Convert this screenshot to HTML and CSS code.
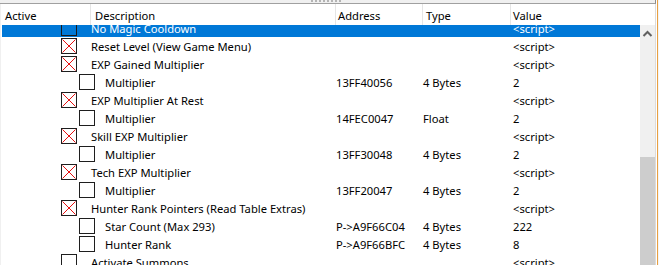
FILE: index.html
```html
<!DOCTYPE html>
<html>
<head>
<meta charset="utf-8">
<link rel="stylesheet" href="styles.css">
</head>
<body>
<div class="frame">
  <div class="main">
    <div class="splitter"><span class="grip"></span></div>
    <div class="list">
      <div class="header">
        <div class="hcell h-active">Active</div>
        <div class="hcell h-desc">Description</div>
        <div class="hcell h-addr">Address</div>
        <div class="hcell h-type">Type</div>
        <div class="hcell h-val">Value</div>
      </div>
      <div class="content">
        <div class="rows">
          <div class="row top selected scrolled">
            <div class="c-desc"><span class="cb"></span><span class="txt">No Magic Cooldown</span></div>
            <div class="c-addr"></div><div class="c-type"></div><div class="c-val">&lt;script&gt;</div>
          </div>
          <div class="row top">
            <div class="c-desc"><span class="cb x"><svg viewBox="0 0 16 16" width="16" height="16"><path d="M1.5 1.5L14.5 14.5M14.5 1.5L1.5 14.5"/></svg></span><span class="txt">Reset Level (View Game Menu)</span></div>
            <div class="c-addr"></div><div class="c-type"></div><div class="c-val">&lt;script&gt;</div>
          </div>
          <div class="row top">
            <div class="c-desc"><span class="cb x"><svg viewBox="0 0 16 16" width="16" height="16"><path d="M1.5 1.5L14.5 14.5M14.5 1.5L1.5 14.5"/></svg></span><span class="txt">EXP Gained Multiplier</span></div>
            <div class="c-addr"></div><div class="c-type"></div><div class="c-val">&lt;script&gt;</div>
          </div>
          <div class="row child">
            <div class="c-desc"><span class="cb"></span><span class="txt">Multiplier</span></div>
            <div class="c-addr">13FF40056</div><div class="c-type">4 Bytes</div><div class="c-val">2</div>
          </div>
          <div class="row top">
            <div class="c-desc"><span class="cb x"><svg viewBox="0 0 16 16" width="16" height="16"><path d="M1.5 1.5L14.5 14.5M14.5 1.5L1.5 14.5"/></svg></span><span class="txt">EXP Multiplier At Rest</span></div>
            <div class="c-addr"></div><div class="c-type"></div><div class="c-val">&lt;script&gt;</div>
          </div>
          <div class="row child">
            <div class="c-desc"><span class="cb"></span><span class="txt">Multiplier</span></div>
            <div class="c-addr">14FEC0047</div><div class="c-type">Float</div><div class="c-val">2</div>
          </div>
          <div class="row top">
            <div class="c-desc"><span class="cb x"><svg viewBox="0 0 16 16" width="16" height="16"><path d="M1.5 1.5L14.5 14.5M14.5 1.5L1.5 14.5"/></svg></span><span class="txt">Skill EXP Multiplier</span></div>
            <div class="c-addr"></div><div class="c-type"></div><div class="c-val">&lt;script&gt;</div>
          </div>
          <div class="row child">
            <div class="c-desc"><span class="cb"></span><span class="txt">Multiplier</span></div>
            <div class="c-addr">13FF30048</div><div class="c-type">4 Bytes</div><div class="c-val">2</div>
          </div>
          <div class="row top">
            <div class="c-desc"><span class="cb x"><svg viewBox="0 0 16 16" width="16" height="16"><path d="M1.5 1.5L14.5 14.5M14.5 1.5L1.5 14.5"/></svg></span><span class="txt">Tech EXP Multiplier</span></div>
            <div class="c-addr"></div><div class="c-type"></div><div class="c-val">&lt;script&gt;</div>
          </div>
          <div class="row child">
            <div class="c-desc"><span class="cb"></span><span class="txt">Multiplier</span></div>
            <div class="c-addr">13FF20047</div><div class="c-type">4 Bytes</div><div class="c-val">2</div>
          </div>
          <div class="row top">
            <div class="c-desc"><span class="cb x"><svg viewBox="0 0 16 16" width="16" height="16"><path d="M1.5 1.5L14.5 14.5M14.5 1.5L1.5 14.5"/></svg></span><span class="txt">Hunter Rank Pointers (Read Table Extras)</span></div>
            <div class="c-addr"></div><div class="c-type"></div><div class="c-val">&lt;script&gt;</div>
          </div>
          <div class="row child">
            <div class="c-desc"><span class="cb"></span><span class="txt">Star Count (Max 293)</span></div>
            <div class="c-addr">P-&gt;A9F66C04</div><div class="c-type">4 Bytes</div><div class="c-val">222</div>
          </div>
          <div class="row child">
            <div class="c-desc"><span class="cb"></span><span class="txt">Hunter Rank</span></div>
            <div class="c-addr">P-&gt;A9F66BFC</div><div class="c-type">4 Bytes</div><div class="c-val">8</div>
          </div>
          <div class="row top">
            <div class="c-desc"><span class="cb"></span><span class="txt">Activate Summons</span></div>
            <div class="c-addr"></div><div class="c-type"></div><div class="c-val">&lt;script&gt;</div>
          </div>
        </div>
        <div class="scrollbar">
          <div class="sb-up"><svg viewBox="0 0 15 17" width="15" height="17"><path d="M3.5 11L7.5 7L11.5 11"/></svg></div>
          <div class="sb-track"></div>
          <div class="sb-thumb"></div>
        </div>
      </div>
    </div>
  </div>
  <div class="edge"></div>
</div>
</body>
</html>
```

FILE: styles.css
```css
html, body {
  margin: 0;
  padding: 0;
  background: #ffffff;
}

.frame {
  width: 659px;
  height: 265px;
  overflow: hidden;
  display: flex;
  font-family: "Noto Sans", "Open Sans", sans-serif;
  font-size: 11.2px;
  color: #000;
}

.main {
  width: 656px;
  display: flex;
  flex-direction: column;
}

.edge {
  width: 3px;
  background: linear-gradient(90deg, #ffffff 0 1px, #e8a042 1px 2px, #f4f4f4 2px 3px);
}

.splitter {
  height: 3px;
  background: #f0f0f0;
  border-bottom: 1px solid #a0a0a0;
  border-right: 1px solid #8c8c8c;
  display: flex;
  justify-content: center;
}

.grip {
  width: 30px;
  height: 2px;
  margin-right: 4px;
  background: repeating-linear-gradient(90deg, #b4b4b4 0 2px, transparent 2px 4px);
}

.list {
  flex: 1;
  display: flex;
  flex-direction: column;
  border-left: 1px solid #f0f0f0;
  border-right: 1px solid #dcdcdc;
  min-height: 0;
}

.header {
  height: 21px;
  display: grid;
  grid-template-columns: 89px 245px 87px 88px 1fr;
  background: #fff;
}

.hcell {
  display: flex;
  align-items: center;
  padding-top: 2px;
  box-sizing: border-box;
  white-space: nowrap;
}

.h-active { padding-left: 4px; }
.h-desc { border-left: 1px solid #e5e5e5; padding-left: 4px; }
.h-addr { border-left: 1px solid #e5e5e5; padding-left: 2px; }
.h-type { border-left: 1px solid #e5e5e5; padding-left: 3px; }
.h-val { border-left: 1px solid #e5e5e5; padding-left: 2px; }

.content {
  flex: 1;
  display: flex;
  min-height: 0;
  overflow: hidden;
}

.rows {
  width: 639px;
  overflow: hidden;
}

.row {
  height: 18px;
  margin-left: 1px;
  display: grid;
  grid-template-columns: 333px 87px 88px 1fr;
  align-items: center;
  white-space: nowrap;
}

.row.scrolled { margin-top: -6px; }

.row.selected {
  background: #0078d7;
  color: #fff;
}

.c-desc {
  display: flex;
  align-items: center;
  height: 18px;
}

.c-addr { padding-left: 1px; }
.c-type { padding-left: 1px; }
.c-val { padding-left: 3px; }

.cb {
  width: 16px;
  height: 16px;
  box-sizing: border-box;
  border: 1px solid #1e1e1e;
  flex: none;
  position: relative;
}

.row.selected .cb { border-color: #1a1a1a; }

.cb.x svg {
  position: absolute;
  left: -1px;
  top: -1px;
}

.cb.x path {
  stroke: #e81010;
  stroke-width: 1;
  fill: none;
}

.row.top .cb { margin-left: 59px; }
.row.top .txt { margin-left: 14px; }
.row.child .cb { margin-left: 77px; }
.row.child .txt { margin-left: 10px; }

.scrollbar {
  width: 15px;
  display: flex;
  flex-direction: column;
  background: #f0f0f0;
}

.sb-up {
  height: 17px;
}

.sb-up path {
  stroke: #606060;
  stroke-width: 2;
  fill: none;
}

.sb-track {
  height: 115px;
}

.sb-thumb {
  flex: 1;
  background: #cdcdcd;
}
```
